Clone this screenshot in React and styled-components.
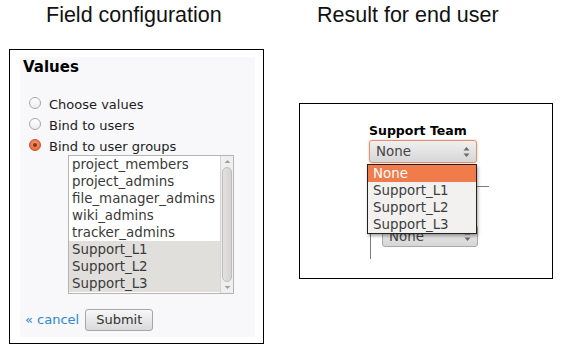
import React from 'react'
import styled, { createGlobalStyle } from 'styled-components'

const GlobalStyle = createGlobalStyle`
  body {
    margin: 0;
    background: #fff;
  }
`

const ui = `"DejaVu Sans", "Noto Sans", sans-serif`

const Page = styled.div`
  display: flex;
  width: 563px;
  height: 351px;
  overflow: hidden;
`

const Column = styled.section`
  width: ${p => p.$w}px;
  margin-left: ${p => p.$ml}px;
  flex-shrink: 0;
`

const Heading = styled.h2`
  margin: 0;
  padding-left: ${p => p.$indent}px;
  font: 400 21.5px/30px "Liberation Sans", Arial, sans-serif;
  color: #111;
  white-space: nowrap;
`

const Frame = styled.div`
  box-sizing: border-box;
  margin-top: ${p => p.$top}px;
  height: ${p => p.$h}px;
  border: 1px solid #000;
  padding: ${p => p.$pad};
  background: #fff;
`

const Fieldset = styled.div`
  height: 100%;
  box-sizing: border-box;
  padding-left: 3px;
  background: #f8f8fb;
  display: flex;
  flex-direction: column;
  font-family: ${ui};
`

const Title = styled.div`
  font-weight: 700;
  font-size: 15px;
  line-height: 20px;
  color: #000;
`

const RadioList = styled.div`
  margin-top: 17px;
`

const RadioRow = styled.label`
  display: flex;
  align-items: center;
  height: 21px;
  padding-left: 6px;
  font-size: 13px;
  line-height: 21px;
  color: #1c1c1c;
`

const RadioDot = styled.span`
  position: relative;
  box-sizing: border-box;
  width: 12px;
  height: 12px;
  margin-right: 8px;
  margin-top: -4px;
  border-radius: 50%;
  border: 1px solid ${p => (p.$checked ? '#c2532e' : '#a8a8a8')};
  background: ${p =>
    p.$checked
      ? 'radial-gradient(circle at 50% 40%, #f49a72 0%, #ec6f43 70%, #d85a30 100%)'
      : 'linear-gradient(#ffffff, #ececec)'};
  &::after {
    content: '';
    display: ${p => (p.$checked ? 'block' : 'none')};
    position: absolute;
    left: 3px;
    top: 3px;
    width: 4px;
    height: 4px;
    border-radius: 50%;
    background: #8a3418;
  }
`

const ListBox = styled.div`
  display: flex;
  box-sizing: border-box;
  width: 166px;
  height: 139px;
  margin: -2px 0 0 45px;
  border: 1px solid #b4b4b4;
  background: #fff;
`

const Items = styled.div`
  flex: 1;
`

const Item = styled.div`
  height: 17px;
  padding-left: 3px;
  font-size: 13.4px;
  line-height: 17px;
  color: #3a3a3a;
  white-space: nowrap;
  background: ${p => (p.$selected ? '#e1dfdc' : 'transparent')};
`

const Scrollbar = styled.div`
  width: 13px;
  display: flex;
  flex-direction: column;
  box-sizing: border-box;
  border-left: 1px solid #d4d4d4;
  background: #efefef;
`

const ScrollArrow = styled.div`
  height: 11px;
  display: flex;
  align-items: center;
  justify-content: center;
`

const Thumb = styled.div`
  flex: 1;
  margin: 0 1px;
  border: 1px solid #bdbdbd;
  border-radius: 6px;
  background: linear-gradient(90deg, #e3e1df, #d6d4d2);
`

const Footer = styled.div`
  display: flex;
  align-items: baseline;
  gap: 6px;
  margin-top: 15px;
  padding-left: 2px;
`

const CancelLink = styled.a`
  font-size: 13px;
  color: #2a89d2;
  text-decoration: none;
`

const Button = styled.button`
  height: 22px;
  padding: 0 10px;
  border: 1px solid #a6a6a6;
  border-radius: 3px;
  background: linear-gradient(#f7f7f7, #d9d9d9);
  font: 13px/20px ${ui};
  color: #333;
`

const FieldLabel = styled.div`
  font-family: ${ui};
  font-weight: 700;
  font-size: 12.5px;
  line-height: 16px;
  color: #000;
`

const SelectWrap = styled.div`
  position: relative;
  width: ${p => p.$w}px;
  margin-top: 1px;
`

const Select = styled.div`
  box-sizing: border-box;
  height: ${p => p.$h}px;
  display: flex;
  align-items: center;
  justify-content: space-between;
  padding: 0 6px 0 6px;
  border: 1px solid ${p => (p.$focus ? '#e2916d' : '#a9a9a9')};
  border-radius: 3px;
  box-shadow: ${p => (p.$focus ? '0 0 2px rgba(236, 120, 70, 0.55)' : 'none')};
  background: linear-gradient(#f0f0f0, #d6d6d6);
  font-family: ${ui};
  font-size: 13.4px;
  color: #444;
`

const Dropdown = styled.div`
  position: absolute;
  z-index: 2;
  top: calc(100% + 1px);
  left: -2px;
  width: 110px;
  box-sizing: border-box;
  border: 1px solid #222;
  background: #f2f1f0;
  box-shadow: 1px 2px 3px rgba(0, 0, 0, 0.35);
  font-family: ${ui};
`

const Option = styled.div`
  height: 17px;
  padding-left: 5px;
  font-size: 13.4px;
  line-height: 17px;
  color: ${p => (p.$active ? '#fff' : '#3d3d3d')};
  background: ${p => (p.$active ? '#f07c4b' : 'transparent')};
`

const Nested = styled.div`
  box-sizing: border-box;
  width: 119px;
  height: 73px;
  margin: 23px 0 0 1px;
  padding: 37px 0 0 11px;
  border-top: 1px solid #7c7c7c;
  border-left: 1px solid #7c7c7c;
`

const Arrows = () => (
  <svg width="7" height="12" viewBox="0 0 7 12">
    <path d="M0.5 4.5 L3.5 1 L6.5 4.5 Z" fill="#6a6a6a" />
    <path d="M0.5 7.5 L3.5 11 L6.5 7.5 Z" fill="#6a6a6a" />
  </svg>
)

const Tri = ({ up }) => (
  <svg width="7" height="5" viewBox="0 0 7 5">
    <path d={up ? 'M0.5 4 L3.5 1 L6.5 4 Z' : 'M0.5 1 L3.5 4 L6.5 1 Z'} fill="#a0a0a0" />
  </svg>
)

const groups = [
  'project_members',
  'project_admins',
  'file_manager_admins',
  'wiki_admins',
  'tracker_admins',
  'Support_L1',
  'Support_L2',
  'Support_L3',
]
const selected = ['Support_L1', 'Support_L2', 'Support_L3']

const radios = [
  { label: 'Choose values' },
  { label: 'Bind to users' },
  { label: 'Bind to user groups', checked: true },
]

export default function App() {
  return (
    <Page>
      <GlobalStyle />
      <Column $w={255} $ml={9}>
        <Heading $indent={37}>Field configuration</Heading>
        <Frame $top={19} $h={295} $pad="7px 8px 6px 10px">
          <Fieldset>
            <Title>Values</Title>
            <RadioList>
              {radios.map(r => (
                <RadioRow key={r.label}>
                  <RadioDot $checked={r.checked} />
                  {r.label}
                </RadioRow>
              ))}
            </RadioList>
            <ListBox>
              <Items>
                {groups.map(g => (
                  <Item key={g} $selected={selected.includes(g)}>{g}</Item>
                ))}
              </Items>
              <Scrollbar>
                <ScrollArrow><Tri up /></ScrollArrow>
                <Thumb />
                <ScrollArrow><Tri /></ScrollArrow>
              </Scrollbar>
            </ListBox>
            <Footer>
              <CancelLink href="#">« cancel</CancelLink>
              <Button type="button">Submit</Button>
            </Footer>
          </Fieldset>
        </Frame>
      </Column>
      <Column $w={254} $ml={35}>
        <Heading $indent={18}>Result for end user</Heading>
        <Frame $top={73} $h={176} $pad="19px 0 0 69px">
          <FieldLabel>Support Team</FieldLabel>
          <SelectWrap $w={108}>
            <Select $h={23} $focus>
              None
              <Arrows />
            </Select>
            <Dropdown>
              <Option $active>None</Option>
              <Option>Support_L1</Option>
              <Option>Support_L2</Option>
              <Option>Support_L3</Option>
            </Dropdown>
          </SelectWrap>
          <Nested>
            <SelectWrap $w={96}>
              <Select $h={22}>
                None
                <Arrows />
              </Select>
            </SelectWrap>
          </Nested>
        </Frame>
      </Column>
    </Page>
  )
}
